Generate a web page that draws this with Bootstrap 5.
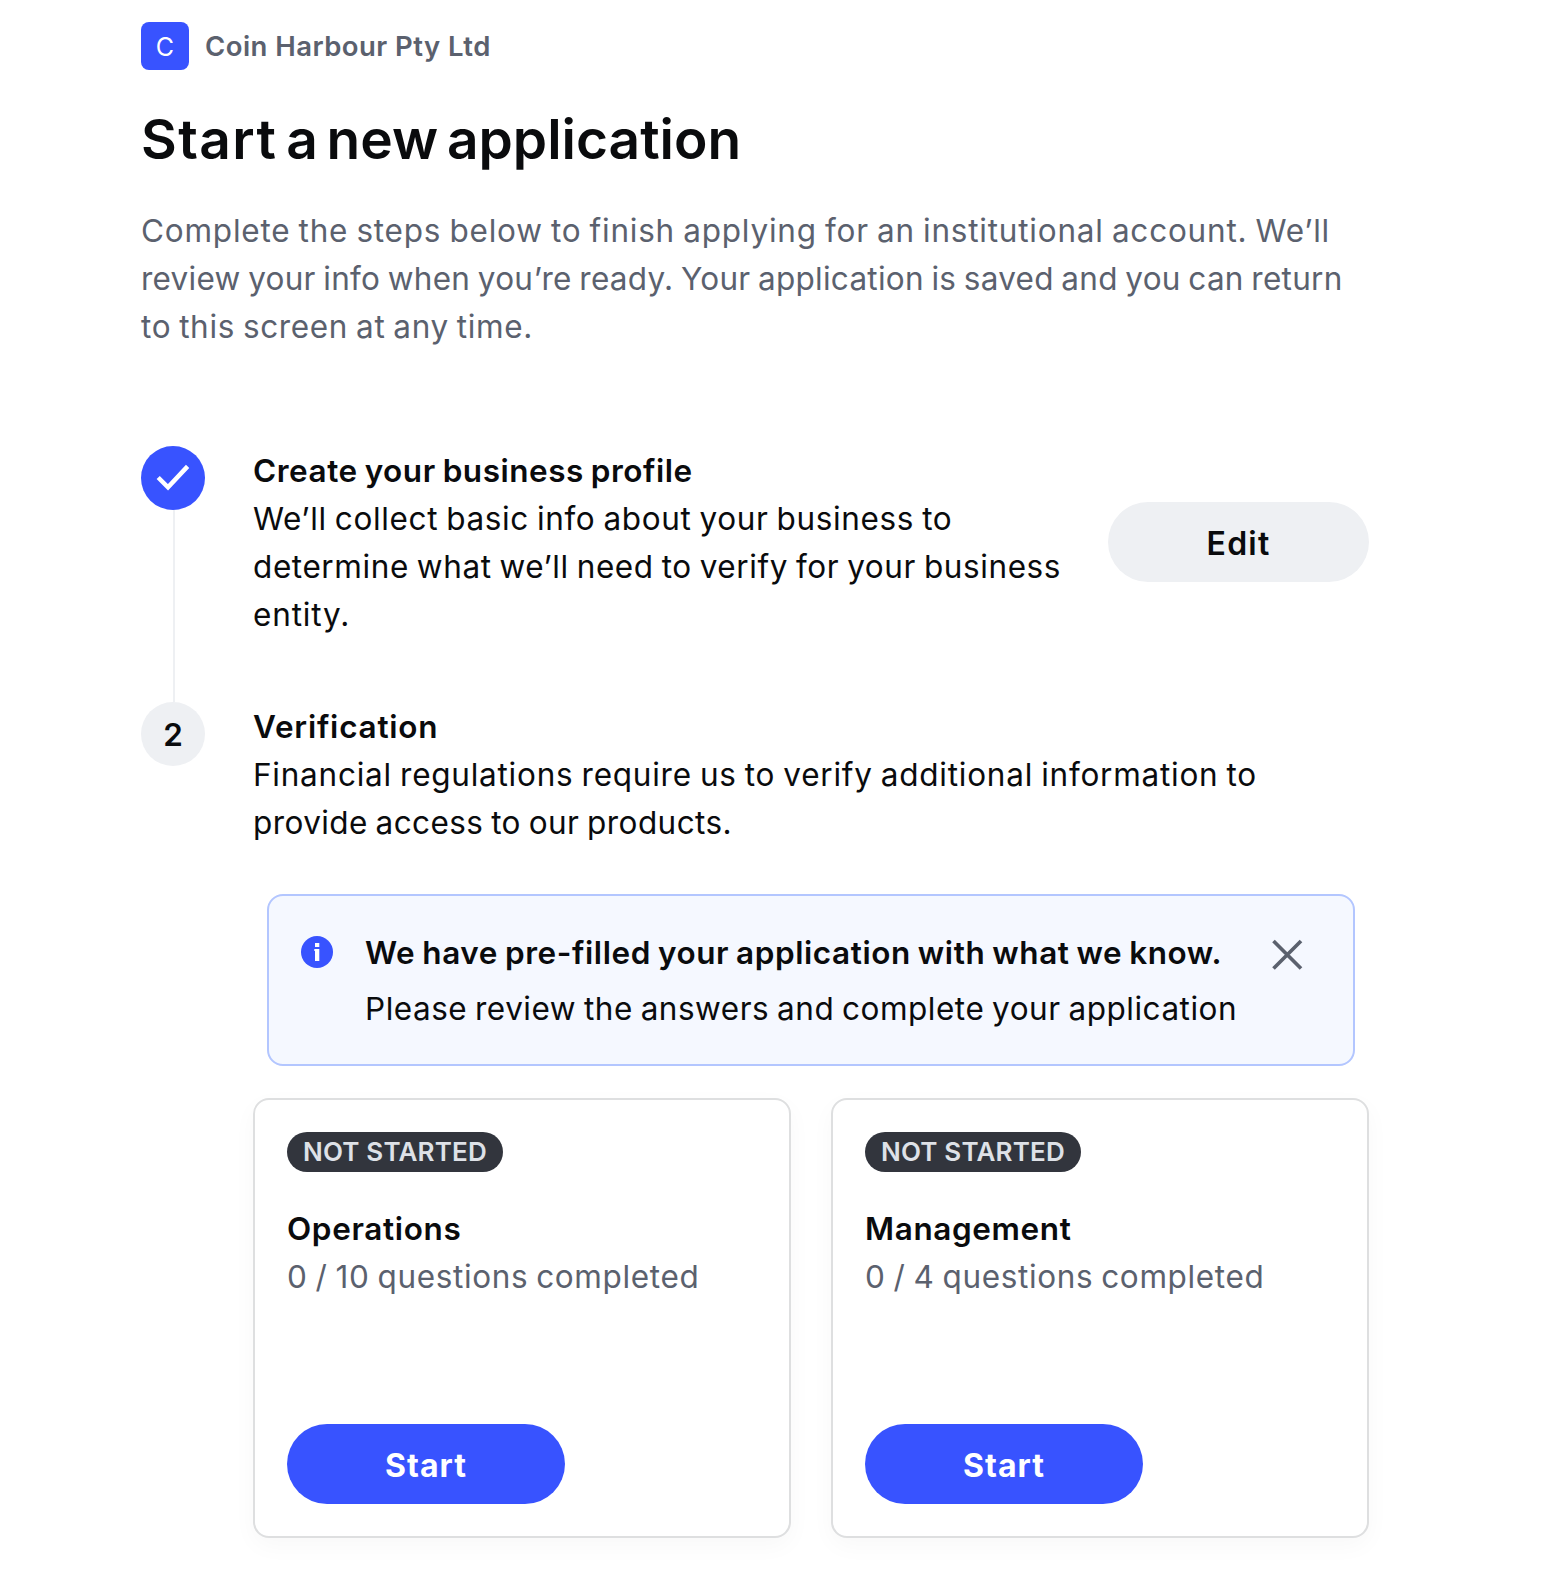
<!DOCTYPE html>
<html lang="en">
<head>
<meta charset="utf-8">
<meta name="viewport" content="width=device-width, initial-scale=1">
<title>Start a new application</title>
<link href="https://cdn.jsdelivr.net/npm/bootstrap@5.3.0/dist/css/bootstrap.min.css" rel="stylesheet">
<style>
  :root { --brand: #3853ff; --ink: #0a0b0d; --muted: #5b616e; --soft: #eef0f3; }
  body { font-family: Inter, "Liberation Sans", sans-serif; font-size: 31.5px; line-height: 48px; color: var(--ink); background: #fff; }
  .page { width: 1228px; margin-left: 141px; padding-top: 22px; padding-bottom: 38px; }
  .ln { display: block; white-space: nowrap; word-spacing: -1.5px; }
  .soft-text { color: var(--muted); }
  .avatar { width: 48px; height: 48px; border-radius: 8px; background: var(--brand); color: #fff; font-size: 25px; padding-top: 1px; }
  .org { font-size: 27.5px; font-weight: 600; color: var(--muted); padding-top: 1px; line-height: 47px; letter-spacing: .45px; }
  .page-title { font-size: 55px; line-height: 72px; font-weight: 600; margin: 33px 0 0; word-spacing: -5px; white-space: nowrap; }
  .title-lead { letter-spacing: 1.4px; }
  .intro { margin: 32px 0 0; }
  .head { font-size: 31.5px; line-height: 48px; font-weight: 600; margin: 0; white-space: nowrap; word-spacing: -1.5px; }
  .steps { margin-top: 95px; }
  .rail { width: 64px; flex: none; }
  .dot { width: 64px; height: 64px; background: var(--soft); font-weight: 600; flex: none; padding-top: 2px; }
  .dot-done { background: var(--brand); padding: 0; }
  .track { width: 2px; margin-left: 1px; background: var(--soft); }
  .step { gap: 48px; }
  .step-one { height: 256px; }
  .step-row { height: 192px; }
  .step-copy { padding-top: 2px; }
  .verify { padding-top: 1px; }
  .pill { height: 80px; border-radius: 40px; border: 0; padding: 4px 0 0; font-size: 32px; font-weight: 600; }
  .pill-edit { width: 261px; background: var(--soft); color: var(--ink); letter-spacing: 1.2px; }
  .pill-start { width: 278px; background: var(--brand); color: #fff; font-weight: 700; letter-spacing: 1px; }
  .notice { margin: 47px 14px 0; height: 172px; border: 2px solid #b3c6ff; border-radius: 16px; background: #f5f8ff; padding: 32px; gap: 32px; color: var(--ink); }
  .notice svg { flex: none; }
  .notice-copy { padding-top: 1px; }
  .notice-icon { margin-top: 8px; }
  .notice-close { margin: 11px 18px 0 auto; padding: 0; border: 0; background: none; line-height: 0; }
  .tasks { gap: 40px; margin-top: 32px; }
  .task { width: 538px; height: 440px; border: 2px solid #dedfe0; border-radius: 16px; padding: 32px; box-shadow: 0 8px 24px rgba(0,0,0,.03); }
  .task-name { margin-top: 33px; }
  .tag { width: 216px; height: 40px; border-radius: 20px; background: #32353d; color: #dee1e7; font-size: 26px; line-height: 40px; font-weight: 600; letter-spacing: .18px; white-space: nowrap; padding: 0; }
  .i1 { letter-spacing: .79px; }
  .i2 { letter-spacing: .26px; }
  .i3 { letter-spacing: .64px; }
  .h1a { letter-spacing: .53px; }
  .s1 { letter-spacing: .65px; }
  .s2 { letter-spacing: .59px; }
  .s3 { letter-spacing: .85px; }
  .h2a { letter-spacing: .78px; }
  .v1 { letter-spacing: .76px; }
  .v2 { letter-spacing: .42px; }
  .n1 { letter-spacing: .57px; }
  .n2 { letter-spacing: .51px; }
  .h3a { letter-spacing: .65px; }
  .h4a { letter-spacing: .62px; }
  .q1, .q2 { letter-spacing: .64px; }
</style>
</head>
<body>
<main class="page">
  <header class="d-flex align-items-center gap-3">
    <span class="avatar d-flex align-items-center justify-content-center">C</span>
    <span class="org">Coin Harbour Pty Ltd</span>
  </header>
  <h1 class="page-title"><span class="title-lead">Start</span> a new application</h1>
  <p class="intro soft-text">
    <span class="ln i1">Complete the steps below to finish applying for an institutional account. We’ll</span>
    <span class="ln i2">review your info when you’re ready. Your application is saved and you can return</span>
    <span class="ln i3">to this screen at any time.</span>
  </p>

  <div class="steps">
    <section class="step step-one d-flex">
      <div class="rail d-flex flex-column align-items-center">
        <span class="dot dot-done rounded-circle d-flex align-items-center justify-content-center">
          <svg width="64" height="64" viewBox="0 0 64 64" fill="none" stroke="#fff" stroke-width="4.5"><path d="M17.2 31.5 27 41.3 46.6 20.4"/></svg>
        </span>
        <span class="track flex-grow-1"></span>
      </div>
      <div class="step-row d-flex align-items-center justify-content-between flex-grow-1">
        <div class="step-copy">
          <h2 class="head h1a">Create your business profile</h2>
          <span class="ln s1">We’ll collect basic info about your business to</span>
          <span class="ln s2">determine what we’ll need to verify for your business</span>
          <span class="ln s3">entity.</span>
        </div>
        <button type="button" class="btn pill pill-edit">Edit</button>
      </div>
    </section>

    <section class="step d-flex">
      <div class="rail"><span class="dot rounded-circle d-flex align-items-center justify-content-center">2</span></div>
      <div class="verify flex-grow-1">
        <h2 class="head h2a">Verification</h2>
        <span class="ln v1">Financial regulations require us to verify additional information to</span>
        <span class="ln v2">provide access to our products.</span>

        <div class="notice d-flex align-items-start">
          <svg class="notice-icon" width="32" height="32" viewBox="0 0 32 32"><circle cx="16" cy="16" r="16" fill="#3853ff"/><path fill="#fff" d="M14 7h4.300v4H14zM13.300 13h5v12H14V15h-.7z"/></svg>
          <div class="notice-copy">
            <h3 class="head n1">We have pre-filled your application with what we know.</h3>
            <span class="ln n2 mt-2">Please review the answers and complete your application</span>
          </div>
          <button type="button" class="notice-close" aria-label="Close">
            <svg width="31" height="31" viewBox="0 0 31 31" stroke="#5b616e" stroke-width="3.7"><path d="M1.500 2 29 29.500M29 2 1.500 29.500"/></svg>
          </button>
        </div>

        <div class="tasks d-flex">
          <div class="card task d-flex flex-column align-items-start">
            <span class="badge tag">NOT STARTED</span>
            <h3 class="head h3a task-name">Operations</h3>
            <span class="ln q1 soft-text">0 / 10 questions completed</span>
            <button type="button" class="btn pill pill-start mt-auto">Start</button>
          </div>
          <div class="card task d-flex flex-column align-items-start">
            <span class="badge tag">NOT STARTED</span>
            <h3 class="head h4a task-name">Management</h3>
            <span class="ln q2 soft-text">0 / 4 questions completed</span>
            <button type="button" class="btn pill pill-start mt-auto">Start</button>
          </div>
        </div>
      </div>
    </section>
  </div>
</main>
<script src="https://cdn.jsdelivr.net/npm/bootstrap@5.3.0/dist/js/bootstrap.bundle.min.js"></script>
</body>
</html>
